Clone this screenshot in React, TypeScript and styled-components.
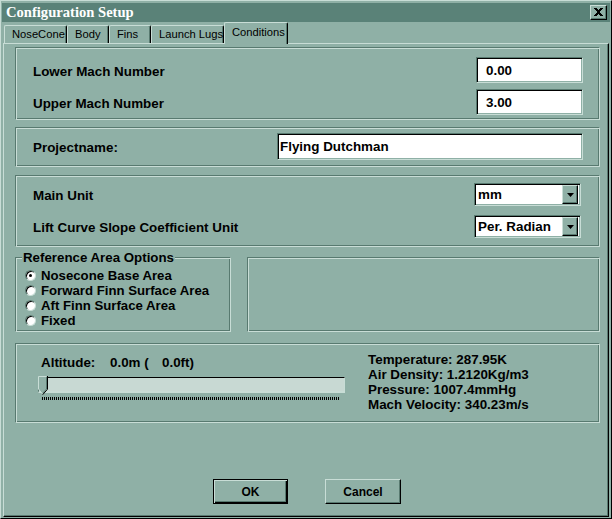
import React from "react";
import styled, { createGlobalStyle } from "styled-components";

const C = {
  bg: "#8fb0a6",
  title: "#5a8278",
  light: "#c8ddd6",
  dark: "#587a70",
  black: "#000000",
  white: "#ffffff",
  track: "#c8d9d3",
};

const Global = createGlobalStyle`
  html, body { margin: 0; padding: 0; background: ${C.bg}; }
  body { font-family: "Liberation Sans", Arial, sans-serif; color: #000; }
  * { box-sizing: border-box; }
`;

const Window = styled.div`
  width: 612px;
  height: 519px;
  background: ${C.bg};
  border-top: 1px solid ${C.light};
  border-left: 1px solid ${C.light};
  border-right: 1px solid ${C.black};
  border-bottom: 1px solid ${C.black};
  padding: 1px;
  display: flex;
  flex-direction: column;
  overflow: hidden;
`;

const TitleBar = styled.div`
  margin-top: 1px;
  height: 19px;
  background: ${C.title};
  display: flex;
  align-items: center;
  justify-content: space-between;
  padding: 0 3px 0 4px;
`;

const TitleText = styled.span`
  font-family: "Liberation Serif", "Times New Roman", serif;
  font-weight: bold;
  font-size: 14.6px;
  color: ${C.white};
  line-height: 19px;
`;

const CloseButton = styled.div`
  width: 17px;
  height: 15px;
  background: ${C.bg};
  border-top: 1px solid ${C.light};
  border-left: 1px solid ${C.light};
  border-right: 1px solid ${C.black};
  border-bottom: 1px solid ${C.black};
  box-shadow: inset -1px -1px 0 ${C.dark};
  display: flex;
  align-items: center;
  justify-content: center;
  padding: 0 1px 1px 0;
`;

const TabRow = styled.div`
  height: 21px;
  display: flex;
  align-items: flex-end;
  padding-left: 2px;
  position: relative;
  z-index: 1;
`;

const Tab = styled.div<{ $w: number; $active?: boolean }>`
  width: ${(p) => p.$w}px;
  height: ${(p) => (p.$active ? 22 : 18)}px;
  margin-bottom: ${(p) => (p.$active ? -1 : 0)}px;
  background: ${C.bg};
  border-top: 1px solid ${C.light};
  border-left: 1px solid ${C.light};
  border-right: 1px solid ${C.black};
  border-radius: 2px 2px 0 0;
  box-shadow: inset -1px 0 0 ${C.dark};
  font-size: 11.2px;
  line-height: ${(p) => (p.$active ? 18 : 17)}px;
  padding-left: 7px;
  white-space: nowrap;
`;

const Panel = styled.div`
  flex: 1;
  margin: 0 1px 0 1px;
  border-top: 1px solid ${C.light};
  border-left: 1px solid ${C.light};
  border-right: 1px solid ${C.black};
  border-bottom: 1px solid ${C.black};
  box-shadow: inset -1px -1px 0 ${C.dark};
  padding: 3px 0 0 11px;
  display: flex;
  flex-direction: column;
`;

const Group = styled.div<{ $h: number; $mt?: number; $w?: number }>`
  position: relative;
  flex: none;
  height: ${(p) => p.$h}px;
  width: ${(p) => p.$w ?? 585}px;
  margin-top: ${(p) => p.$mt ?? 0}px;
  border: 1px solid;
  border-color: ${C.dark} ${C.light} ${C.light} ${C.dark};
  box-shadow: inset 1px 1px 0 ${C.light}, inset -1px -1px 0 ${C.dark};
`;

const FormGroup = styled(Group)<{ $pt: number; $pr: number; $gap: number }>`
  display: flex;
  flex-direction: column;
  gap: ${(p) => p.$gap}px;
  padding: ${(p) => p.$pt}px ${(p) => p.$pr}px 0 17px;
`;

const Row = styled.div`
  display: flex;
  align-items: center;
  justify-content: space-between;
`;

const Label = styled.span`
  font-size: 13.4px;
  font-weight: bold;
  white-space: nowrap;
  padding-top: 2px;
`;

const Field = styled.div<{ $w: number; $h: number; $indent: number }>`
  width: ${(p) => p.$w}px;
  height: ${(p) => p.$h}px;
  background: ${C.white};
  border-top: 1px solid ${C.dark};
  border-left: 1px solid ${C.dark};
  border-right: 1px solid ${C.light};
  border-bottom: 1px solid ${C.light};
  box-shadow: inset 1px 1px 0 ${C.black}, inset -1px -1px 0 ${C.bg};
  font-size: 13.4px;
  font-weight: bold;
  padding-left: ${(p) => p.$indent}px;
  display: flex;
  align-items: center;
  white-space: nowrap;
`;

const Select = styled.div`
  width: 107px;
  height: 23px;
  background: ${C.white};
  border-top: 1px solid ${C.dark};
  border-left: 1px solid ${C.dark};
  border-right: 1px solid ${C.light};
  border-bottom: 1px solid ${C.light};
  box-shadow: inset 1px 1px 0 ${C.black}, inset -1px -1px 0 ${C.bg};
  display: flex;
  align-items: center;
  justify-content: space-between;
  padding: 2px 2px 2px 3px;
  font-size: 13.4px;
  font-weight: bold;
  white-space: nowrap;
`;

const SelectButton = styled.div`
  width: 16px;
  height: 19px;
  background: ${C.bg};
  border-top: 1px solid ${C.light};
  border-left: 1px solid ${C.light};
  border-right: 1px solid ${C.black};
  border-bottom: 1px solid ${C.black};
  box-shadow: inset -1px -1px 0 ${C.dark};
  display: flex;
  align-items: center;
  justify-content: center;
`;

const LowerRow = styled.div`
  display: flex;
  gap: 16px;
  margin-top: 10px;
`;

const RadioGroup = styled(Group)`
  padding: 10px 0 0 9px;
  display: flex;
  flex-direction: column;
`;

const Caption = styled.span`
  position: absolute;
  top: -8px;
  left: 6px;
  padding: 0 1px;
  background: ${C.bg};
  font-size: 13.3px;
  font-weight: bold;
  line-height: 16px;
  white-space: nowrap;
`;

const RadioRow = styled.div`
  display: flex;
  align-items: center;
  gap: 5px;
  height: 15px;
  font-size: 13.2px;
  font-weight: bold;
  white-space: nowrap;
`;

const RadioDot = styled.span<{ $on?: boolean }>`
  position: relative;
  width: 11px;
  height: 11px;
  border-radius: 50%;
  background: ${C.white};
  border: 1px solid;
  border-color: ${C.dark} ${C.light} ${C.light} ${C.dark};
  box-shadow: inset 1px 1px 0 ${C.black};
  flex: none;
  &::after {
    content: "";
    display: ${(p) => (p.$on ? "block" : "none")};
    position: absolute;
    left: 3px;
    top: 3px;
    width: 3px;
    height: 3px;
    border-radius: 50%;
    background: ${C.black};
  }
`;

const AltitudeGroup = styled(Group)`
  display: flex;
  align-items: flex-start;
  padding: 8px 0 0 22px;
`;

const SliderColumn = styled.div`
  width: 307px;
  margin-top: 3px;
  display: flex;
  flex-direction: column;
`;

const AltLabel = styled.div`
  display: flex;
  padding-left: 3px;
  height: 15px;
  line-height: 15px;
  font-size: 13.4px;
  font-weight: bold;
  white-space: pre;
`;

const Cell = styled.span<{ $w?: number }>`
  width: ${(p) => (p.$w ? `${p.$w}px` : "auto")};
`;

const Track = styled.div`
  position: relative;
  margin-top: 7px;
  height: 16px;
  background: ${C.track};
  border-top: 1px solid ${C.black};
  border-bottom: 2px solid ${C.light};
  border-left: 1px solid ${C.dark};
  border-right: 1px solid ${C.light};
`;

const Thumb = styled.svg`
  position: absolute;
  left: -1px;
  top: -2px;
`;

const Ticks = styled.div`
  margin: 4px 0 0 4px;
  width: 297px;
  height: 3px;
  background: repeating-linear-gradient(90deg, ${C.black} 0 1px, transparent 1px 2px);
`;

const InfoColumn = styled.div`
  margin-left: 23px;
  display: flex;
  flex-direction: column;
  font-size: 13.4px;
  font-weight: bold;
  line-height: 15px;
  white-space: nowrap;
`;

const ButtonRow = styled.div`
  display: flex;
  gap: 37px;
  margin-top: 56px;
  padding-left: 198px;
`;

const Button = styled.div<{ $default?: boolean; $w: number }>`
  width: ${(p) => p.$w}px;
  height: 25px;
  background: ${C.bg};
  font-size: 12px;
  font-weight: bold;
  display: flex;
  align-items: center;
  justify-content: center;
  border: 1px solid;
  border-color: ${(p) => (p.$default ? `${C.black}` : `${C.light} ${C.black} ${C.black} ${C.light}`)};
  box-shadow: ${(p) =>
    p.$default
      ? `inset 1px 1px 0 ${C.light}, inset -1px -1px 0 ${C.black}, inset -2px -2px 0 ${C.dark}`
      : `inset -1px -1px 0 ${C.dark}`};
`;

const CloseIcon = () => (
  <svg width="9" height="8" viewBox="0 0 9 8" shapeRendering="crispEdges">
    <path d="M0 0h3v1h1v1h1v-1h1v-1h3v1h-1v1h-1v1h-1v2h1v1h1v1h1v1h-3v-1h-1v-1h-1v1h-1v1h-3v-1h1v-1h1v-1h1v-2h-1v-1h-1v-1h-1z" fill="#000" />
  </svg>
);

const ArrowIcon = () => (
  <svg width="7" height="4" viewBox="0 0 7 4">
    <path d="M0 0h7L3.5 4z" fill="#000" />
  </svg>
);

const ThumbIcon = () => (
  <Thumb width="10" height="19" viewBox="0 0 10 19">
    <polygon points="0.5,0.5 8.5,0.5 8.5,13 4.5,18 0.5,13" fill={C.bg} />
    <polyline points="0.5,13 0.5,0.5 8.5,0.5" fill="none" stroke={C.light} strokeWidth="1" />
    <polyline points="9.5,0 9.5,13.2 4.7,18.7" fill="none" stroke={C.black} strokeWidth="1" />
    <polyline points="8.5,1 8.5,13 4.5,17.5" fill="none" stroke={C.dark} strokeWidth="1" />
    <polyline points="0.5,13 4.5,18" fill="none" stroke={C.light} strokeWidth="1" />
  </Thumb>
);

const tabs = [
  { label: "NoseCone", w: 63 },
  { label: "Body", w: 42 },
  { label: "Fins", w: 42 },
  { label: "Launch Lugs", w: 73 },
  { label: "Conditions", w: 64, active: true },
];

const radios = [
  { label: "Nosecone Base Area", on: true },
  { label: "Forward Finn Surface Area" },
  { label: "Aft Finn Surface Area" },
  { label: "Fixed" },
];

export default function App() {
  return (
    <>
      <Global />
      <Window>
        <TitleBar>
          <TitleText>Configuration Setup</TitleText>
          <CloseButton>
            <CloseIcon />
          </CloseButton>
        </TitleBar>
        <TabRow>
          {tabs.map((t) => (
            <Tab key={t.label} $w={t.w} $active={t.active}>
              {t.label}
            </Tab>
          ))}
        </TabRow>
        <Panel>
          <FormGroup $h={73} $pt={9} $pr={16} $gap={6}>
            <Row>
              <Label>Lower Mach Number</Label>
              <Field $w={107} $h={26} $indent={9}>0.00</Field>
            </Row>
            <Row>
              <Label>Upper Mach Number</Label>
              <Field $w={107} $h={26} $indent={9}>3.00</Field>
            </Row>
          </FormGroup>
          <FormGroup $h={40} $mt={7} $pt={5} $pr={16} $gap={0}>
            <Row>
              <Label>Projectname:</Label>
              <Field $w={306} $h={27} $indent={2}>Flying Dutchman</Field>
            </Row>
          </FormGroup>
          <FormGroup $h={72} $mt={8} $pt={7} $pr={18} $gap={9}>
            <Row>
              <Label>Main Unit</Label>
              <Select>
                mm
                <SelectButton>
                  <ArrowIcon />
                </SelectButton>
              </Select>
            </Row>
            <Row>
              <Label>Lift Curve Slope Coefficient Unit</Label>
              <Select>
                Per. Radian
                <SelectButton>
                  <ArrowIcon />
                </SelectButton>
              </Select>
            </Row>
          </FormGroup>
          <LowerRow>
            <RadioGroup $h={75} $w={216}>
              <Caption>Reference Area Options</Caption>
              {radios.map((r) => (
                <RadioRow key={r.label}>
                  <RadioDot $on={r.on} />
                  {r.label}
                </RadioRow>
              ))}
            </RadioGroup>
            <Group $h={75} $w={353} />
          </LowerRow>
          <AltitudeGroup $h={80} $mt={11}>
            <SliderColumn>
              <AltLabel>
                <Cell $w={69}>Altitude:</Cell>
                <Cell $w={52}>0.0m (</Cell>
                <Cell>0.0ft)</Cell>
              </AltLabel>
              <Track>
                <ThumbIcon />
              </Track>
              <Ticks />
            </SliderColumn>
            <InfoColumn>
              <span>Temperature: 287.95K</span>
              <span>Air Density: 1.2120Kg/m3</span>
              <span>Pressure: 1007.4mmHg</span>
              <span>Mach Velocity: 340.23m/s</span>
            </InfoColumn>
          </AltitudeGroup>
          <ButtonRow>
            <Button $default $w={75}>OK</Button>
            <Button $w={76}>Cancel</Button>
          </ButtonRow>
        </Panel>
      </Window>
    </>
  );
}
